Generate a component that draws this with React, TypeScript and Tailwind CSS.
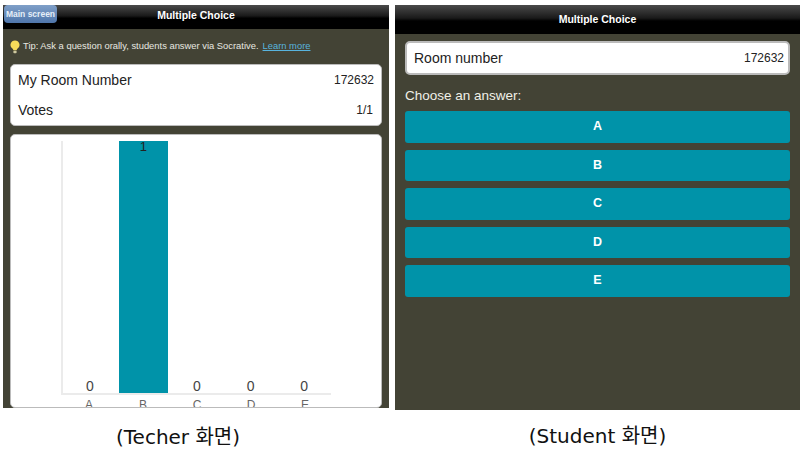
const font = "font-['Liberation_Sans',Arial,sans-serif]";
const caption = "font-['DejaVu_Sans','Noto_Sans_CJK_KR',sans-serif] text-[20px] leading-[24px] text-[#111] text-center";

function Header({ h, size, children }: { h: string; size: string; children?: React.ReactNode }) {
  return (
    <div className={`relative ${h} shrink-0 bg-[linear-gradient(#4a4a4a_0%,#1a1a1a_45%,#000_55%,#000_100%)] flex items-center justify-center`}>
      {children}
      <span className={`${size} font-bold text-white`}>Multiple Choice</span>
    </div>
  );
}

function Row({ label, value, cls }: { label: string; value: string; cls: string }) {
  return (
    <div className={`flex items-center justify-between ${cls}`}>
      <span className="text-[14px] text-[#222]">{label}</span>
      <span className="text-[12px] text-[#222]">{value}</span>
    </div>
  );
}

const bars = [
  { l: "A", v: 0 },
  { l: "B", v: 1 },
  { l: "C", v: 0 },
  { l: "D", v: 0 },
  { l: "E", v: 0 },
];

function Chart() {
  return (
    <div className="mt-[8px] mx-[7px] h-[280px] bg-white rounded-[5px] border border-[#bbb] overflow-hidden pl-[50px] pt-[6px]">
      <div className="w-[270px] h-[254px] border-l-2 border-b-2 border-[#ebebeb] flex">
        {bars.map((b) => (
          <div key={b.l} className="w-[54px] h-full flex flex-col justify-end items-center">
            {b.v > 0 ? (
              <div className="w-[49px] h-full bg-[#0093a9] text-center text-[13px] leading-[11px] text-[#222]">1</div>
            ) : (
              <span className="text-[14px] leading-[14px] text-[#444]">0</span>
            )}
          </div>
        ))}
      </div>
      <div className="w-[270px] flex ml-[1px] mt-[3px]">
        {bars.map((b) => (
          <div key={b.l} className="w-[54px] text-center text-[12px] leading-[14px] text-[#666]">{b.l}</div>
        ))}
      </div>
    </div>
  );
}

export default function App() {
  return (
    <div className={`w-[800px] h-[463px] bg-white overflow-hidden flex ${font}`}>
      <div className="ml-[3px] w-[386px] shrink-0 flex flex-col">
        <div className="mt-[5px] h-[403px] bg-[#434335] overflow-hidden flex flex-col">
          <Header h="h-[24px]" size="text-[10.5px] leading-[20px] pb-[5px]">
            <div className="absolute left-[1px] top-0 w-[53px] h-[18px] bg-[linear-gradient(#7f9fc8,#4f76ab)] rounded-[4px] text-[8.5px] font-bold leading-[18px] text-center text-[#e6eef8]">Main screen</div>
          </Header>
          <div className="h-[35px] shrink-0 flex items-center pl-[7px] text-[9.4px] text-[#e8e8e0]">
            <svg width="10" height="14" viewBox="0 0 10 14" className="mr-[3px] shrink-0">
              <path d="M5 0.5a4.4 4.4 0 0 0-2.6 8c.6.5.8 1 .9 1.8h3.4c.1-.8.3-1.3.9-1.8A4.4 4.4 0 0 0 5 .5z" fill="#f7dc5a" />
              <rect x="3.4" y="10.8" width="3.2" height="2.4" rx="0.8" fill="#cfc9a0" />
            </svg>
            <span>Tip: Ask a question orally, students answer via Socrative.</span>
            <span className="ml-[4px] text-[#58b4de] underline">Learn more</span>
          </div>
          <div className="mx-[7px] h-[62px] shrink-0 bg-white rounded-[5px] border border-[#bbb] flex flex-col">
            <Row label="My Room Number" value="172632" cls="h-[30px] pl-[7px] pr-[7px]" />
            <Row label="Votes" value="1/1" cls="h-[30px] pl-[7px] pr-[8px]" />
          </div>
          <Chart />
        </div>
        <div className={`mt-[17px] pr-[36px] ${caption}`}>(Techer 화면)</div>
      </div>
      <div className="ml-[6px] w-[405px] shrink-0 flex flex-col">
        <div className="mt-[5px] h-[405px] bg-[#434335] overflow-hidden flex flex-col">
          <Header h="h-[29px]" size="text-[10.5px]" />
          <div className="mt-[7px] mx-[10px] h-[34px] bg-white rounded-[5px] border-2 border-[#bbb] flex items-center justify-between pl-[7px] pr-[4px]">
            <span className="text-[14px] text-[#222]">Room number</span>
            <span className="text-[12px] text-[#222]">172632</span>
          </div>
          <div className="mt-[13px] ml-[10px] h-[16px] text-[13.5px] leading-[16px] text-[#f0f0e8]">Choose an answer:</div>
          <div className="mt-[7px] mx-[10px] flex flex-col gap-[7px]">
            {["A", "B", "C", "D", "E"].map((l) => (
              <div key={l} className="h-[31.5px] bg-[#0093a9] rounded-[3px] flex items-center justify-center text-[12.5px] font-bold text-white">{l}</div>
            ))}
          </div>
        </div>
        <div className={`mt-[14px] pr-[0px] ${caption}`}>(Student 화면)</div>
      </div>
    </div>
  );
}
